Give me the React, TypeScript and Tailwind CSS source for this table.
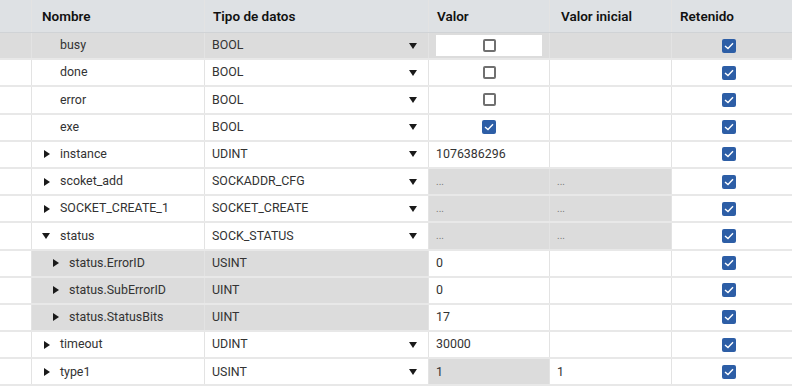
import React from "react";

type Row = {
  name: string;
  level: 0 | 1;
  arrow?: "right" | "down";
  type: string;
  dropdown: boolean;
  value?: React.ReactNode;
  valueGray?: boolean;
  init?: string;
  initGray?: boolean;
  selected?: boolean;
  nameGray?: boolean;
};

const Tri = ({ dir }: { dir: "right" | "down" }) =>
  dir === "right" ? (
    <svg width="6" height="8" viewBox="0 0 6 8"><path d="M0 0 L6 4 L0 8 Z" fill="#1a1a1a" /></svg>
  ) : (
    <svg width="8" height="6" viewBox="0 0 8 6"><path d="M0 0 L8 0 L4 6 Z" fill="#1a1a1a" /></svg>
  );

const Checked = () => (
  <div className="w-[14px] h-[14px] rounded-[2px] bg-[#2d5ea6] flex items-center justify-center">
    <svg width="10" height="8" viewBox="0 0 10 8"><path d="M1 4 L4 6.6 L9 1.2" stroke="white" strokeWidth="1.4" fill="none" /></svg>
  </div>
);

const Unchecked = () => (
  <div className="w-[13px] h-[13px] rounded-[2px] border-2 border-[#707070] bg-white" />
);

const rows: Row[] = [
  { name: "busy", level: 0, type: "BOOL", dropdown: true, value: "unchecked", selected: true, initGray: true },
  { name: "done", level: 0, type: "BOOL", dropdown: true, value: "unchecked" },
  { name: "error", level: 0, type: "BOOL", dropdown: true, value: "unchecked" },
  { name: "exe", level: 0, type: "BOOL", dropdown: true, value: "checked" },
  { name: "instance", level: 0, arrow: "right", type: "UDINT", dropdown: true, value: "1076386296" },
  { name: "scoket_add", level: 0, arrow: "right", type: "SOCKADDR_CFG", dropdown: true, value: "...", valueGray: true, init: "...", initGray: true },
  { name: "SOCKET_CREATE_1", level: 0, arrow: "right", type: "SOCKET_CREATE", dropdown: true, value: "...", valueGray: true, init: "...", initGray: true },
  { name: "status", level: 0, arrow: "down", type: "SOCK_STATUS", dropdown: true, value: "...", valueGray: true, init: "...", initGray: true },
  { name: "status.ErrorID", level: 1, arrow: "right", type: "USINT", dropdown: false, value: "0", nameGray: true },
  { name: "status.SubErrorID", level: 1, arrow: "right", type: "UINT", dropdown: false, value: "0", nameGray: true },
  { name: "status.StatusBits", level: 1, arrow: "right", type: "UINT", dropdown: false, value: "17", nameGray: true },
  { name: "timeout", level: 0, arrow: "right", type: "UDINT", dropdown: true, value: "30000" },
  { name: "type1", level: 0, arrow: "right", type: "USINT", dropdown: true, value: "1", valueGray: true, init: "1" },
];

const cell = "h-full border-r border-[#e3e3e3] flex items-center shrink-0";

export default function App() {
  return (
    <div
      className="w-[792px] h-[386px] overflow-hidden bg-white text-[12.4px] text-[#333]"
      style={{ fontFamily: "Roboto, 'Liberation Sans', sans-serif" }}
    >
      <div className="flex h-[33px] bg-[#dee1e4] border-b border-[#d0d3d6] text-[13.5px] font-semibold text-[#111]">
        <div className={`${cell} w-[32px] border-[#cfd2d5]`} />
        <div className={`${cell} w-[173px] pl-[10px] border-[#cfd2d5]`}>Nombre</div>
        <div className={`${cell} w-[224px] pl-[8px] border-[#cfd2d5]`}>Tipo de datos</div>
        <div className={`${cell} w-[121px] pl-[8px] border-[#cfd2d5]`}>Valor</div>
        <div className={`${cell} w-[122px] pl-[11px] border-[#cfd2d5]`}>Valor inicial</div>
        <div className="h-full flex-1 flex items-center pl-[8px]">Retenido</div>
      </div>
      {rows.map((r, i) => {
        const sel = r.selected;
        const gray = "bg-[#dcdcdc]";
        return (
          <div key={i} className={`flex h-[27.2px] border-b-2 border-[#e8e8e8] ${sel ? gray : "bg-white"}`}>
            <div className={`${cell} w-[32px]`} />
            <div className={`${cell} w-[173px] ${r.nameGray ? gray : ""}`}>
              <div className={`${r.level === 1 ? "w-[37px]" : "w-[28px]"} flex justify-end pr-[10px] shrink-0`}>
                {r.arrow && <Tri dir={r.arrow} />}
              </div>
              <span className="whitespace-nowrap">{r.name}</span>
            </div>
            <div className={`${cell} w-[224px] pl-[7px] pr-[11px] justify-between ${r.nameGray ? gray : ""}`}>
              <span className="whitespace-nowrap">{r.type}</span>
              {r.dropdown && <Tri dir="down" />}
            </div>
            <div className={`${cell} w-[121px] ${r.valueGray ? gray : ""} ${sel ? "px-[7px] py-[2px]" : ""}`}>
              {r.value === "unchecked" || r.value === "checked" ? (
                <div className={`w-full h-full flex items-center justify-center ${sel ? "bg-white" : ""}`}>
                  {r.value === "checked" ? <Checked /> : <Unchecked />}
                </div>
              ) : (
                <span className={`pl-[7px] whitespace-nowrap ${r.value === "..." ? "text-[10px] text-[#777]" : ""}`}>{r.value}</span>
              )}
            </div>
            <div className={`${cell} w-[122px] pl-[7px] ${r.initGray ? gray : ""}`}>
              <span className={r.init === "..." ? "text-[10px] text-[#777]" : ""}>{r.init}</span>
            </div>
            <div className="h-full flex-1 flex items-center pl-[50px]">
              <Checked />
            </div>
          </div>
        );
      })}
    </div>
  );
}
